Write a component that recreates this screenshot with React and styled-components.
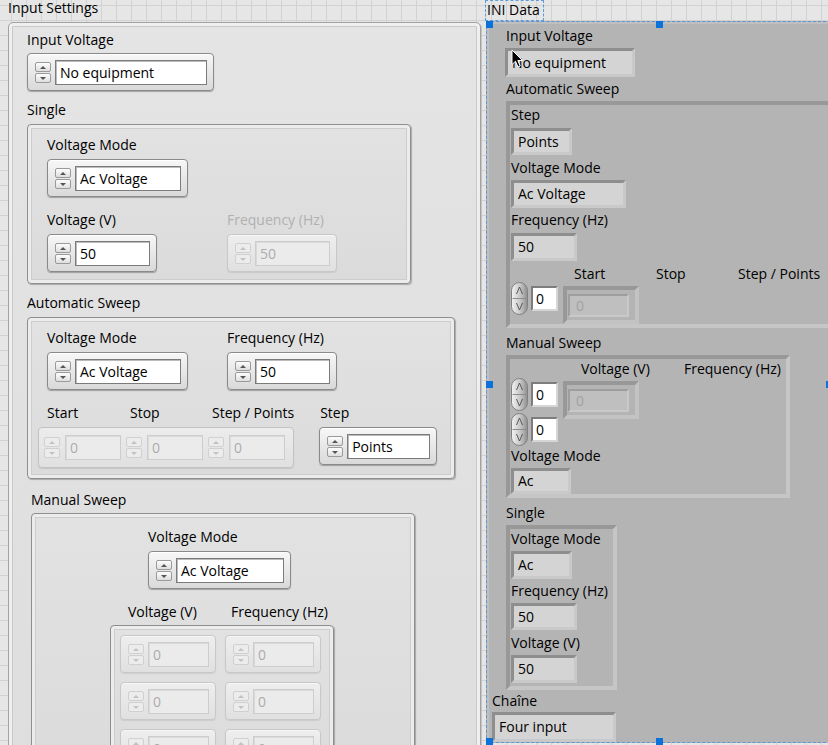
import React from 'react';
import styled, { createGlobalStyle } from 'styled-components';

const GlobalStyle = createGlobalStyle`
  html, body {
    margin: 0;
    height: 745px;
    overflow: hidden;
  }
  body {
    background-color: #e6e6e6;
    background-image:
      linear-gradient(#d2d2d2 1px, transparent 1px),
      linear-gradient(90deg, #d2d2d2 1px, transparent 1px);
    background-size: 15px 15px;
    background-position: -4px 5px;
    font-family: "Open Sans", "Noto Sans", sans-serif;
    font-size: 14px;
    color: #000;
  }
`;

const Page = styled.div`
  position: relative;
  display: flex;
  align-items: flex-start;
  width: 828px;
  height: 745px;
  overflow: hidden;
`;

/* ---------- left: silver controls ---------- */

const LeftColumn = styled.section`
  flex: none;
  width: 473px;
  margin-left: 8px;
`;

const PanelTitle = styled.div`
  height: 22px;
  line-height: 16px;
  white-space: nowrap;
`;

const SilverFrame = styled.div`
  box-sizing: border-box;
  height: 760px;
  padding: 7px 0 0 18px;
  border: 1px solid #a2a2a2;
  border-radius: 5px;
  background: linear-gradient(#e4e4e4, #dedede);
  box-shadow: inset 0 0 0 3px #efefef, inset 0 0 0 4px #c9c9c9, 1px 1px 0 #c4c4c4;
`;

const Caption = styled.div`
  width: ${p => (p.$w ? `${p.$w}px` : 'auto')};
  height: ${p => p.$h || 20}px;
  line-height: ${p => p.$h || 20}px;
  margin: ${p => p.$mt || 0}px 0 0 ${p => p.$ml || 0}px;
  padding-left: ${p => p.$pl || 0}px;
  color: ${p => (p.$dim ? '#b1b1b1' : '#000')};
  white-space: nowrap;
  flex: none;
`;

const SilverGroup = styled.div`
  box-sizing: border-box;
  width: ${p => p.$w}px;
  margin: ${p => p.$mt || 0}px 0 0 ${p => p.$ml || 0}px;
  padding: ${p => p.$pad};
  border: 1px solid #8e8e8e;
  border-radius: 4px;
  background: linear-gradient(#e2e2e2, #dbdbdb);
  box-shadow: inset 0 0 0 3px #ececec, inset 0 0 0 4px #cdcdcd, 1px 1px 1px rgba(0, 0, 0, 0.25);
`;

const ArrayFrame = styled(SilverGroup)`
  display: grid;
  grid-template-columns: 95px 95px;
  gap: 9px 10px;
`;

const FieldGrid = styled.div`
  display: grid;
  grid-template-columns: 180px auto;
  margin-top: ${p => p.$mt || 0}px;
`;

const Control = styled.div`
  box-sizing: border-box;
  display: flex;
  align-items: center;
  gap: 4px;
  width: fit-content;
  height: 38px;
  margin: ${p => p.$mt || 0}px 0 0 ${p => p.$ml || 0}px;
  padding: 1px 6px 0 7px;
  border: 1px solid ${p => (p.$disabled ? '#c8c8c8' : '#8a8a8a')};
  border-radius: 4px;
  background: ${p =>
    p.$disabled ? 'linear-gradient(#eeeeee, #e0e0e0)' : 'linear-gradient(#f7f7f7, #d9d9d9)'};
  box-shadow: ${p =>
    p.$disabled
      ? '0 1px 1px rgba(0,0,0,0.08), inset 0 1px 0 #f6f6f6'
      : '0 1px 1px rgba(0,0,0,0.28), inset 0 1px 0 #ffffff'};
`;

const SpinCol = styled.div`
  display: flex;
  flex-direction: column;
  gap: 1px;
  flex: none;
`;

const SpinBtn = styled.div`
  box-sizing: border-box;
  display: flex;
  align-items: center;
  justify-content: center;
  width: 16px;
  height: 10px;
  border: 1px solid ${p => (p.$disabled ? '#d0d0d0' : '#9a9a9a')};
  border-radius: 2px;
  background: ${p => (p.$disabled ? '#ececec' : 'linear-gradient(#fdfdfd, #dedede)')};

  &::after {
    content: '';
    border-left: 3px solid transparent;
    border-right: 3px solid transparent;
    ${p => (p.$down ? 'border-top' : 'border-bottom')}: 3px solid ${p => (p.$disabled ? '#c2c2c2' : '#555')};
  }
`;

const Field = styled.div`
  box-sizing: border-box;
  flex: none;
  width: ${p => p.$w}px;
  height: 25px;
  line-height: 23px;
  padding-left: 4px;
  border: 1px solid ${p => (p.$disabled ? '#cdcdcd' : '#7b7b7b')};
  background: ${p => (p.$disabled ? '#ebebeb' : '#fff')};
  box-shadow: inset 1px 1px 0 ${p => (p.$disabled ? '#dadada' : '#bcbcbc')};
  color: ${p => (p.$disabled ? '#ababab' : '#000')};
  white-space: nowrap;
  overflow: hidden;
`;

const Spinners = ({ disabled }) => (
  <SpinCol>
    <SpinBtn $disabled={disabled} />
    <SpinBtn $disabled={disabled} $down />
  </SpinCol>
);

const Spinner = ({ w, value, disabled, mt, ml }) => (
  <Control $disabled={disabled} $mt={mt} $ml={ml}>
    <Spinners disabled={disabled} />
    <Field $w={w} $disabled={disabled}>{value}</Field>
  </Control>
);

const SweepRow = styled.div`
  display: flex;
  align-items: flex-start;
  margin-top: 13px;
`;

const SweepBlock = styled.div`
  margin-left: ${p => p.$ml || 0}px;
`;

const SweepLabels = styled.div`
  display: grid;
  grid-template-columns: 83px 82px auto;
  padding-left: 9px;
`;

const DimArray = styled.div`
  box-sizing: border-box;
  display: flex;
  align-items: center;
  gap: 5px;
  height: 41px;
  margin-top: 4px;
  padding: 0 7px 0 5px;
  border: 1px solid #c3c3c3;
  border-radius: 4px;
  background: linear-gradient(#ececec, #e0e0e0);
  box-shadow: 0 1px 1px rgba(0, 0, 0, 0.1);
`;

const DimItem = styled.div`
  display: flex;
  align-items: center;
  gap: 5px;
`;

const LabelRow = styled.div`
  display: flex;
  margin: ${p => p.$mt || 0}px 0 0 ${p => p.$ml || 0}px;
`;

/* ---------- right: classic indicators ---------- */

const RightColumn = styled.section`
  flex: none;
  width: 343px;
  margin-left: 4px;
`;

const SelLabel = styled.div`
  box-sizing: border-box;
  display: inline-block;
  height: 21px;
  line-height: 18px;
  padding: 0 3px 0 1px;
  border: 1px dashed #5f9bd6;
  white-space: nowrap;
`;

const IniCluster = styled.div`
  position: relative;
  box-sizing: border-box;
  width: 350px;
  height: 722px;
  margin-left: 1px;
  padding: 4px 0 0 19px;
  border: 1px dashed #5b97d5;
  background: #b4b4b4;
  box-shadow: inset 2px 2px 0 #bfbfbf;
`;

const Handle = styled.span`
  position: absolute;
  left: ${p => p.$x}px;
  top: ${p => p.$y}px;
  width: 7px;
  height: 7px;
  background: #0a72d8;
`;

const Readout = styled.div`
  box-sizing: border-box;
  width: ${p => p.$w}px;
  height: ${p => p.$h || 28}px;
  line-height: ${p => (p.$h || 28) - 6}px;
  margin: ${p => p.$mt || 0}px 0 0 ${p => p.$ml || 0}px;
  padding-left: 4px;
  border: 3px solid;
  border-color: #8e8e8e #c9c9c9 #c9c9c9 #8e8e8e;
  background: #d4d4d4;
  white-space: nowrap;
`;

const Recess = styled.div`
  box-sizing: border-box;
  width: ${p => p.$w}px;
  margin-top: ${p => p.$mt || 0}px;
  padding: ${p => p.$pad || '0'};
  border: 4px solid;
  border-color: #989898 #c6c6c6 #c6c6c6 #989898;
`;

const ArrayLine = styled.div`
  display: flex;
  align-items: flex-start;
  gap: 5px;
`;

const IndexStack = styled.div`
  display: flex;
  flex-direction: column;
  gap: 2px;
`;

const IndexCtl = styled.div`
  display: flex;
  align-items: center;
  gap: 3px;
`;

const IndexBox = styled.div`
  box-sizing: border-box;
  width: 27px;
  height: 25px;
  line-height: 21px;
  padding-left: 3px;
  border: 2px solid;
  border-color: #7d7d7d #d6d6d6 #d6d6d6 #7d7d7d;
  background: #fff;
`;

const DimCell = styled.div`
  box-sizing: border-box;
  width: 76px;
  height: 38px;
  margin-top: ${p => p.$mt || 0}px;
  padding: 4px 0 0 1px;
  border: 4px solid;
  border-color: #989898 #c3c3c3 #c3c3c3 #989898;
`;

const DimBox = styled.div`
  box-sizing: border-box;
  width: 61px;
  height: 23px;
  line-height: 19px;
  padding-left: 6px;
  border: 2px solid;
  border-color: #9e9e9e #c9c9c9 #c9c9c9 #9e9e9e;
  background: #bfbfbf;
  color: #a1a1a1;
`;

const Cursor = styled.svg`
  position: absolute;
  left: 511px;
  top: 49px;
`;

const RoundSpin = () => (
  <svg width="17" height="33" viewBox="0 0 17 33">
    <defs>
      <linearGradient id="roundSpinFill" x1="0" x2="1" y1="0" y2="0">
        <stop offset="0" stopColor="#f3f3f3" />
        <stop offset="0.55" stopColor="#c6c6c6" />
        <stop offset="1" stopColor="#8e8e8e" />
      </linearGradient>
    </defs>
    <rect x="0.5" y="0.5" width="16" height="32" rx="8" fill="url(#roundSpinFill)" stroke="#808080" />
    <line x1="1.5" y1="16.5" x2="15.5" y2="16.5" stroke="#8d8d8d" />
    <path d="M5.5 12 L8.5 5 L11.5 12" fill="none" stroke="#4d4d4d" strokeWidth="0.9" />
    <path d="M5.5 21 L8.5 28 L11.5 21" fill="none" stroke="#4d4d4d" strokeWidth="0.9" />
  </svg>
);

const IndexControl = () => (
  <IndexCtl>
    <RoundSpin />
    <IndexBox>0</IndexBox>
  </IndexCtl>
);

const App = () => {
  return (
    <Page>
      <GlobalStyle />

      <LeftColumn>
        <PanelTitle>Input Settings</PanelTitle>
        <SilverFrame>
          <Caption>Input Voltage</Caption>
          <Spinner mt={3} w={152} value="No equipment" />

          <Caption $mt={9}>Single</Caption>
          <SilverGroup $w={384} $mt={4} $pad="10px 0 11px 19px">
            <Caption>Voltage Mode</Caption>
            <Spinner mt={4} w={106} value="Ac Voltage" />
            <FieldGrid $mt={13}>
              <div>
                <Caption>Voltage (V)</Caption>
                <Spinner mt={4} w={75} value="50" />
              </div>
              <div>
                <Caption $dim>Frequency (Hz)</Caption>
                <Spinner mt={4} w={75} value="50" disabled />
              </div>
            </FieldGrid>
          </SilverGroup>

          <Caption $mt={9}>Automatic Sweep</Caption>
          <SilverGroup $w={428} $mt={4} $pad="10px 0 10px 19px">
            <FieldGrid>
              <div>
                <Caption>Voltage Mode</Caption>
                <Spinner mt={4} w={106} value="Ac Voltage" />
              </div>
              <div>
                <Caption>Frequency (Hz)</Caption>
                <Spinner mt={4} w={75} value="50" />
              </div>
            </FieldGrid>
            <SweepRow>
              <SweepBlock $ml={-9}>
                <SweepLabels>
                  <Caption>Start</Caption>
                  <Caption>Stop</Caption>
                  <Caption>Step / Points</Caption>
                </SweepLabels>
                <DimArray>
                  {['start', 'stop', 'step'].map(k => (
                    <DimItem key={k}>
                      <Spinners disabled />
                      <Field $w={56} $disabled>0</Field>
                    </DimItem>
                  ))}
                </DimArray>
              </SweepBlock>
              <SweepBlock $ml={25}>
                <Caption $pl={1}>Step</Caption>
                <Spinner mt={4} w={83} value="Points" />
              </SweepBlock>
            </SweepRow>
          </SilverGroup>

          <Caption $mt={11} $ml={4}>Manual Sweep</Caption>
          <SilverGroup $w={384} $mt={3} $ml={4} $pad="13px 0 0 0" style={{ height: 260 }}>
            <Caption $ml={116}>Voltage Mode</Caption>
            <Spinner mt={4} ml={116} w={108} value="Ac Voltage" />
            <LabelRow $mt={13} $ml={96}>
              <Caption $w={103}>Voltage (V)</Caption>
              <Caption>Frequency (Hz)</Caption>
            </LabelRow>
            <ArrayFrame $w={224} $mt={3} $ml={78} $pad="9px 9px 9px 9px">
              {[0, 1, 2, 3, 4, 5].map(i => (
                <Spinner key={i} w={61} value="0" disabled />
              ))}
            </ArrayFrame>
          </SilverGroup>
        </SilverFrame>
      </LeftColumn>

      <RightColumn>
        <SelLabel>INI Data</SelLabel>
        <IniCluster>
          <Handle $x={-1} $y={-1} />
          <Handle $x={169} $y={-1} />
          <Handle $x={-1} $y={359} />
          <Handle $x={339} $y={359} />
          <Handle $x={-1} $y={716} />
          <Handle $x={169} $y={716} />

          <Caption>Input Voltage</Caption>
          <Readout $w={130} $h={29} $mt={2} $ml={-1}>No equipment</Readout>

          <Caption $mt={2}>Automatic Sweep</Caption>
          <Recess $w={340} $mt={2} $pad="0 0 0 1px">
            <Caption>Step</Caption>
            <Readout $w={61} $h={27} $mt={3}>Points</Readout>
            <Caption $mt={3}>Voltage Mode</Caption>
            <Readout $w={115} $mt={2}>Ac Voltage</Readout>
            <Caption $mt={2}>Frequency (Hz)</Caption>
            <Readout $w={66} $mt={3}>50</Readout>
            <LabelRow $mt={4} $ml={63}>
              <Caption $w={82} $h={17}>Start</Caption>
              <Caption $w={82} $h={17}>Stop</Caption>
              <Caption $h={17}>Step / Points</Caption>
            </LabelRow>
            <ArrayLine>
              <IndexControl />
              <DimCell $mt={4}>
                <DimBox>0</DimBox>
              </DimCell>
            </ArrayLine>
          </Recess>

          <Caption $mt={5}>Manual Sweep</Caption>
          <Recess $w={284} $mt={2} $pad="1px 0 0 1px">
            <LabelRow $ml={70}>
              <Caption $w={103} $h={18}>Voltage (V)</Caption>
              <Caption $h={18}>Frequency (Hz)</Caption>
            </LabelRow>
            <ArrayLine>
              <IndexStack>
                <IndexControl />
                <IndexControl />
              </IndexStack>
              <DimCell $mt={3}>
                <DimBox>0</DimBox>
              </DimCell>
            </ArrayLine>
            <Caption>Voltage Mode</Caption>
            <Readout $w={60} $h={26} $mt={2}>Ac</Readout>
          </Recess>

          <Caption $mt={5}>Single</Caption>
          <Recess $w={111} $mt={2} $pad="0 0 3px 1px">
            <Caption>Voltage Mode</Caption>
            <Readout $w={61} $mt={2}>Ac</Readout>
            <Caption $mt={2}>Frequency (Hz)</Caption>
            <Readout $w={66} $h={27} $mt={2}>50</Readout>
            <Caption $mt={3}>Voltage (V)</Caption>
            <Readout $w={66} $mt={2}>50</Readout>
          </Recess>

          <Caption $mt={1} $ml={-14}>Chaîne</Caption>
          <Readout $w={124} $h={30} $mt={1} $ml={-14}>Four input</Readout>
        </IniCluster>
      </RightColumn>

      <Cursor width="13" height="20" viewBox="0 0 13 20">
        <path
          d="M1 1 L1 15.5 L4.5 12.2 L7 18 L9.2 17 L6.8 11.5 L11.5 11.5 Z"
          fill="#000"
          stroke="#fff"
          strokeWidth="1"
        />
      </Cursor>
    </Page>
  );
};

export default App;
